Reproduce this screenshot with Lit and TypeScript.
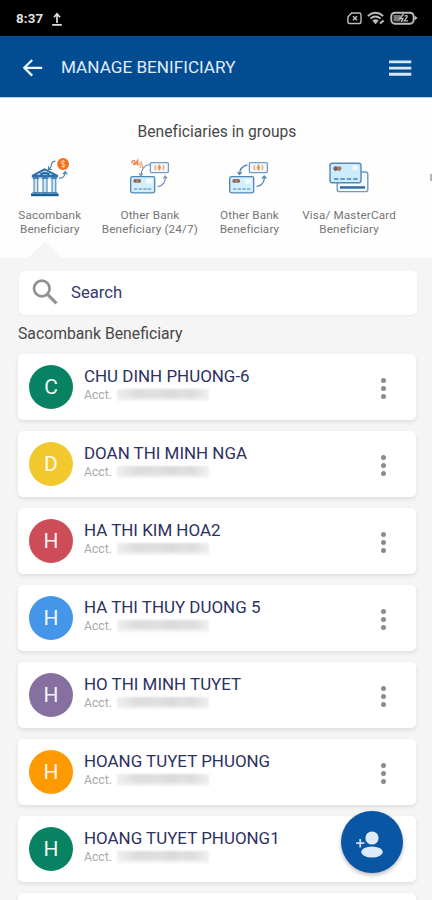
import { LitElement, html, svg, css, nothing } from "lit";
import { customElement, property } from "lit/decorators.js";

const miniCard = svg`
  <rect x="9.7" y="21.7" width="24" height="16.2" rx="1.8" fill="#d3effc" stroke="#4f86b5" stroke-width="1.3"/>
  <rect x="12.4" y="24" width="7.6" height="3.8" rx="1.6" fill="#8d6a66"/>
  <path d="M16 24.2v3.4" stroke="#e8a070" stroke-width=".8"/>
  <rect x="25" y="23.8" width="6.4" height="4.6" fill="#f4fbff"/>
  <path d="M13 34h18" stroke="#4480b4" stroke-width="1.2" stroke-dasharray="3.4 1.2"/>`;

const note = svg`
  <rect x="29.4" y="7.6" width="18" height="10" rx="1" fill="#f3faff" stroke="#6f9dc6" stroke-width="1.3"/>
  <path d="M35 10.2q-2 2.4 0 4.8M41.8 10.2q2 2.4 0 4.8" fill="none" stroke="#f2a466" stroke-width="1.3"/>
  <path d="M38.4 9.6v6M36.8 12.6h3.2" stroke="#f08c3c" stroke-width="1.7"/>`;

const icons = {
  bank: svg`
    <path d="M11.8 20 24.5 13.2 38 20v2.4H11.8z" fill="#2f6fa9"/>
    <path d="M16.5 19.8 24.8 15.5 33 19.8z" fill="#d3ecfa"/>
    <path d="M20.5 19.4q4.4-3 8.8 0" fill="none" stroke="#1e5f9e" stroke-width="2"/>
    <g fill="#cfe8f8" stroke="#3b78ae" stroke-width="1"><path d="M14 23h3.8v14.6H14zM23 23h4v14.6h-4zM32 23h3.8v14.6H32z"/></g>
    <path d="M12.7 23.2h6.4M21.6 23.2h6.8M30.6 23.2h6.4" stroke="#2f6fa9" stroke-width="1.3"/>
    <path d="M11 39.8h27.6" stroke="#1b5c9b" stroke-width="2.8"/><path d="M12.4 37.7h24.8" stroke="#4280b5" stroke-width="1.2"/>
    <path d="M35.4 6.2q-3.6.2-4 3.5t-2.5 4.6M39 23.2q5.8.4 6.1-6M42.9 19.2l2.4-2.6 2 2.8M28.5 11.2v3.3h3.4" fill="none" stroke="#547fa8" stroke-width="1.2"/>
    <circle cx="43.1" cy="9" r="5.9" fill="#f1711b"/>
    <path d="M45 6.7q-3.8-1.8-3.8.6 0 1.5 2 1.7 2.1.3 2 1.7-.1 2.2-4 .6M43.1 4.9v8" fill="none" stroke="#ffd1aa" stroke-width="1"/>`,
  fast: svg`${miniCard}${note}
    <path d="M10.7 8.5q.2-3.2 2.1-3 2 .3-.2 3.9h2.5M16.6 10.4V5.2l-2.4 3.6h3.6" fill="none" stroke="#ed8b57" stroke-width="1.3"/>
    <path d="M18.6 7.5 19.4 13M20 6.5l2.2 7.5" stroke="#ef9a66" stroke-width="1.1"/>
    <path d="M29 9.5q-8.5.8-9 11M18 18.4l1.9 2.4 1.9-2.4M36.5 31.6q6.4-.8 7.7-7.2v-3M42.6 23.4l1.6-2.3 1.9 2.2" fill="none" stroke="#7897ba" stroke-width="1.25"/>`,
  other: svg`${miniCard}${note}
    <path d="M27.4 10q-7.6 1.6-8 9.2M17.5 16.9l1.9 2.6 2.3-2.3M36.6 31.6q6.5-1.3 7.6-7.2v-2.8M42.1 23.5l2.1-2.6 2.2 2.6" fill="none" stroke="#5787b3" stroke-width="1.3"/>`,
  visa: svg`
    <rect x="17.2" y="17" width="30.6" height="19.6" rx="2.2" fill="#f6fbff" stroke="#7099c2" stroke-width="1.4"/>
    <rect x="20" y="31.2" width="25" height="2.5" fill="#2d6da9"/>
    <rect x="10" y="8.2" width="31" height="19.6" rx="2.2" fill="#ccecfb" stroke="#5588b6" stroke-width="1.4"/>
    <circle cx="15.7" cy="13.6" r="2.3" fill="#785d62"/><circle cx="19.2" cy="13.6" r="2.3" fill="#a87663"/>
    <rect x="32.5" y="10.5" width="5.4" height="4.8" fill="#ecf8fe"/>
    <path d="M14 24h24" stroke="#427fb4" stroke-width="1.3" stroke-dasharray="4.4 2"/>`,
};

interface Group { icon: keyof typeof icons; lines: [string, string]; }

const groups: Group[] = [
  { icon: "bank", lines: ["Sacombank", "Beneficiary"] },
  { icon: "fast", lines: ["Other Bank", "Beneficiary (24/7)"] },
  { icon: "other", lines: ["Other Bank", "Beneficiary"] },
  { icon: "visa", lines: ["Visa/ MasterCard", "Beneficiary"] },
];

const people = [
  { name: "CHU DINH PHUONG-6", color: "#078263" },
  { name: "DOAN THI MINH NGA", color: "#f1c92f" },
  { name: "HA THI KIM HOA2", color: "#cc4c58" },
  { name: "HA THI THUY DUONG 5", color: "#4595e8" },
  { name: "HO THI MINH TUYET", color: "#86709f" },
  { name: "HOANG TUYET PHUONG", color: "#ff9900" },
  { name: "HOANG TUYET PHUONG1", color: "#078263" },
];

@customElement("beneficiary-card")
class BeneficiaryCard extends LitElement {
  @property() name = "";
  @property() color = "";

  static styles = css`
    :host { display: block; height: 66px; flex: none; background: #fff; border-radius: 5px; box-shadow: 0 2px 4px #00000018; }
    .row { display: flex; height: 100%; padding: 0 23px 0 11px; }
    .avatar { width: 44px; height: 44px; margin-top: 10.5px; border-radius: 50%; color: #fffffff0; font-size: 21px; line-height: 44px; text-align: center; }
    .info { flex: 1; margin-left: 11px; padding-top: 12px; }
    .name { color: #2d315f; font-size: 16.95px; line-height: 21px; white-space: nowrap; }
    .acct { display: flex; align-items: center; color: #a9a9a9; font-size: 12.2px; line-height: 16px; height: 16px; }
    .label { width: 33px; }
    .mask { width: 92px; height: 12px; background: linear-gradient(#ededed00, #ededed00 60%, #f4f4f4 95%), linear-gradient(90deg, #efefef, #dcdcdc 22%, #e0e0e0 45%, #d9d9d9 60%, #e0e0e0 70%, #dcdcdc 82%, #f0f0f0); filter: blur(1.2px); }
    .dots { display: flex; flex-direction: column; gap: 3px; padding-top: 24px; width: 20px; align-items: center; }
    .dot { width: 5px; height: 5px; border-radius: 50%; background: #8c8c8c; }
  `;

  render() {
    if (!this.name) return nothing;
    return html`<div class="row">
      <div class="avatar" style="background:${this.color}">${this.name.charAt(0)}</div>
      <div class="info"><div class="name">${this.name}</div>
        <div class="acct"><span class="label">Acct.</span><span class="mask"></span></div></div>
      <div class="dots"><i class="dot"></i><i class="dot"></i><i class="dot"></i></div>
    </div>`;
  }
}

@customElement("app-root")
class AppRoot extends LitElement {
  static styles = css`
    :host { display: flex; flex-direction: column; position: relative; width: 432px; height: 900px; overflow: hidden; background: #f5f5f5; font-family: Roboto, sans-serif; }
    * { box-sizing: border-box; }
    svg { display: block; }
    .status { flex: none; height: 36px; display: flex; align-items: center; padding: 1px 13px 0 16px; background: #000; color: #e0e0e0; font-size: 13.3px; font-weight: 700; letter-spacing: .2px; }
    .upload { margin-left: 8px; }
    .indicators { margin-left: auto; }
    .bar { flex: none; height: 62px; display: flex; align-items: center; padding: 0 20px 0 22px; background: #024d92; border-bottom: 1px solid #b7cce0; color: #e2ecf8; }
    .title { flex: 1; margin-left: 17px; font-size: 17.15px; line-height: 24px; }
    .groups { flex: none; position: relative; height: 160px; background: #fefefe; padding-top: 24px; overflow: hidden; }
    .heading { text-align: center; font-size: 15.6px; line-height: 20px; color: #474747; padding-left: 2px; letter-spacing: .03px; }
    .list { display: flex; margin-top: 13px; }
    .group { flex: none; width: 99.6px; display: flex; flex-direction: column; align-items: center; font-size: 11.7px; line-height: 14px; letter-spacing: .15px; color: #757575; text-align: center; white-space: nowrap; }
    .group svg { margin-bottom: 1px; }
    .group:not(:first-child) { padding-left: 1px; }
    .group:not(:first-child) svg { margin-left: 2px; }
    .next { width: 2px; height: 7px; margin: 19px 0 0 32px; background: #b5b5b5; }
    .pointer { position: absolute; left: 28px; bottom: 0; width: 34px; height: 17px; background: #f5f5f5; clip-path: polygon(50% 0, 100% 100%, 0 100%); }
    .search { flex: none; display: flex; align-items: center; height: 44px; margin: 13px 15px 0 19px; padding-left: 13px; border-radius: 6px; background: #fff; box-shadow: 0 1px 2px #0000000c; color: #343a6c; font-size: 16.7px; }
    .search span { margin-top: -2px; }
    .search svg { margin: -3px 13px 0 0; }
    .section { flex: none; margin: 8px 0 10px 18px; font-size: 15.75px; line-height: 21px; color: #484848; }
    .cards { display: flex; flex-direction: column; gap: 11.05px; margin: 0 16px 0 18px; }
    .fab { position: absolute; left: 341px; top: 811px; width: 62px; height: 62px; border-radius: 50%; background: #0856a4; box-shadow: 0 2px 4px #00000045; }
  `;

  render() {
    return html`
      <div class="status"><span>8:37</span>
        <svg class="upload" width="12" height="14" viewBox="0 0 12 14"><path d="M6 11V2M3 5.2 6 1.8l3 3.4M1.2 12.8h9.6" fill="none" stroke="#e0e0e0" stroke-width="1.7"/></svg>
        <svg class="indicators" width="73" height="16" viewBox="0 0 73 16" fill="none" stroke="#bdbdbd" stroke-width="1.4">
          <path d="M4.6 2h7.6q1.8 0 1.8 1.7v7q0 1.8-1.8 1.8H2.5Q.9 12.5.9 10.7V6z" transform="translate(1)"/><path d="m7 5.3 4 4M11 5.3l-4 4" stroke-width="1.6"/>
          <path d="M21.8 5q7.7-6.4 15.4 0M24.4 7.6q5.1-4.2 10.2 0" stroke-width="1.8"/><path d="m26.3 9.5 3.2 3.7 3.2-3.7q-3.2-2.4-6.4 0z" fill="#bdbdbd" stroke="none"/><path d="m34 12.6 3.6-3.2" stroke-width="2"/>
          <rect x="45.3" y="1.7" width="22.3" height="11" rx="3.6" stroke-width="1.9"/><path d="M47.5 4h7v6.4h-7z" fill="#777" stroke="none"/><path d="M68.5 4.6 71.6 7l-3.1 2.6z" fill="#bdbdbd" stroke="none"/>
          <path d="M57.5 3 53.8 7.4h3L55.5 11" stroke-width="1.5"/><path d="M58.3 5.2q3.6-1.5 2.7 1l-2.7 3.6h3.7" stroke-width="1.3"/>
        </svg>
      </div>
      <div class="bar">
        <svg width="22" height="22" viewBox="0 0 22 22"><path d="M20.2 11.8H2.8M10.2 4 2.3 11.8l7.9 7.8" fill="none" stroke="#f0f6fc" stroke-width="2.3"/></svg>
        <div class="title">MANAGE BENIFICIARY</div>
        <svg width="24" height="22" viewBox="0 0 24 22"><path d="M1 5.9h22.3M1 12.1h22.3M1 18.2h22.3" stroke="#d8e6f4" stroke-width="2.9"/></svg>
      </div>
      <div class="groups">
        <div class="heading">Beneficiaries in groups</div>
        <div class="list">
          ${groups.map(g => html`<div class="group">
            <svg width="60" height="52" viewBox="0 0 60 52">${icons[g.icon]}</svg>
            <span>${g.lines[0]}</span><span>${g.lines[1]}</span>
          </div>`)}
          <div class="next"></div>
        </div>
        <div class="pointer"></div>
      </div>
      <div class="search">
        <svg width="26" height="26" viewBox="0 0 26 26"><circle cx="9.8" cy="9.5" r="7.8" fill="none" stroke="#919191" stroke-width="2.7"/><path d="m15.5 15.3 9 9" stroke="#919191" stroke-width="3.1"/></svg>
        <span>Search</span>
      </div>
      <div class="section">Sacombank Beneficiary</div>
      <div class="cards">
        ${people.map(p => html`<beneficiary-card .name=${p.name} .color=${p.color}></beneficiary-card>`)}
        <beneficiary-card></beneficiary-card>
      </div>
      <div class="fab">
        <svg width="62" height="62" viewBox="0 0 62 62" fill="#dfebfa"><circle cx="31" cy="27" r="6.6"/><ellipse cx="31" cy="41" rx="10.8" ry="5.6"/><path d="M15 32.2h8.4M19.2 28v8.6" stroke="#c9dcf2" stroke-width="1.8"/></svg>
      </div>`;
  }
}
